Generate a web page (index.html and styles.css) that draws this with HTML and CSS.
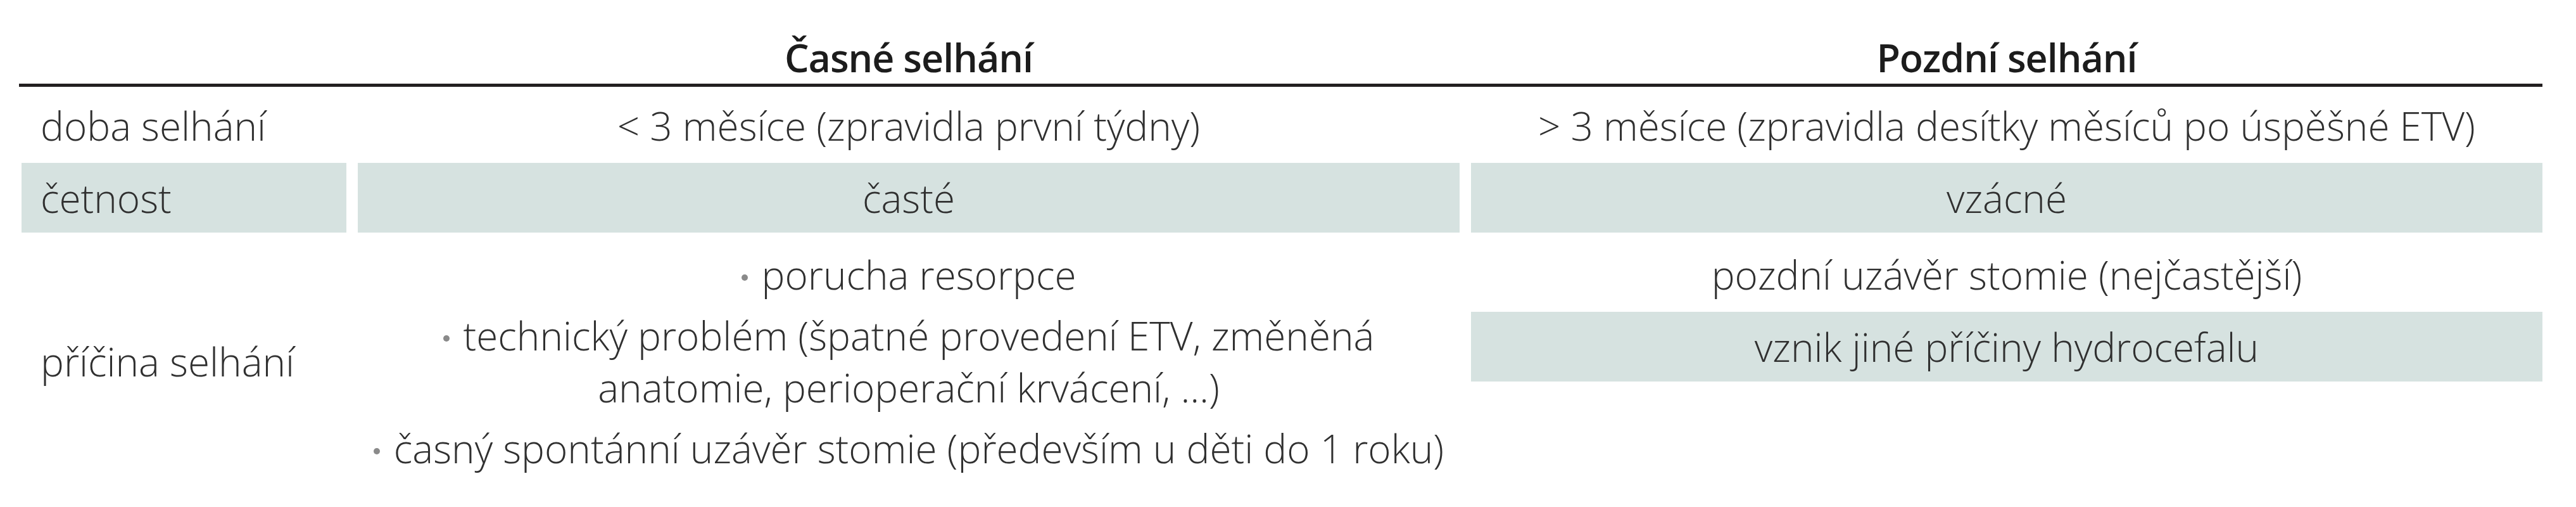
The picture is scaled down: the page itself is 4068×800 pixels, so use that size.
FILE: index.html
```html
<!DOCTYPE html>
<html lang="cs">
<head>
<meta charset="utf-8">
<title>Selhání ETV</title>
<link rel="stylesheet" href="styles.css">
</head>
<body>
<div class="page">
  <div class="table">
    <div class="row head">
      <div class="cell"></div>
      <div class="cell c">Časné selhání</div>
      <div class="cell c">Pozdní selhání</div>
    </div>
    <div class="row r-doba">
      <div class="cell label">doba selhání</div>
      <div class="cell c">&lt; 3 měsíce (zpravidla první týdny)</div>
      <div class="cell c">&gt; 3 měsíce (zpravidla desítky měsíců po úspěšné ETV)</div>
    </div>
    <div class="row r-cet">
      <div class="cell label shade">četnost</div>
      <div class="cell c shade">časté</div>
      <div class="cell c shade">vzácné</div>
    </div>
    <div class="row r-cause">
      <div class="cell label mid">příčina selhání</div>
      <div class="cell c list">
        <p class="item"><span class="dot"></span>porucha resorpce</p>
        <p class="item"><span class="dot"></span>technický problém (špatné provedení ETV, změněná<br>anatomie, perioperační krvácení, …)</p>
        <p class="item"><span class="dot"></span>časný spontánní uzávěr stomie (především u děti do 1 roku)</p>
      </div>
      <div class="stack">
        <div class="cell c pad">pozdní uzávěr stomie (nejčastější)</div>
        <div class="cell c pad shade">vznik jiné příčiny hydrocefalu</div>
      </div>
    </div>
  </div>
</div>
</body>
</html>
```
FILE: styles.css
```css
html, body {
  margin: 0;
  padding: 0;
  background: #ffffff;
}

body {
  font-family: "Open Sans", "Noto Sans", "DejaVu Sans", sans-serif;
  font-weight: 300;
  font-size: 62px;
  line-height: 82px;
  color: #303030;
}

.page {
  padding: 0 53px 0 30px;
}

.table {
  width: 3985px;
}

.row {
  display: grid;
  grid-template-columns: 513px 1740px 1692px;
  column-gap: 18px;
  padding-left: 4px;
}

.head {
  padding-top: 50px;
  border-bottom: 5px solid #231f20;
}

.head .cell {
  font-weight: 600;
  font-size: 61px;
  letter-spacing: -1px;
  color: #1c1c1c;
}

.r-doba {
  padding-top: 20px;
}

.r-cet {
  margin-top: 18px;
}

.r-cet .cell {
  padding: 14px 0;
}

.r-cause {
  margin-top: 11px;
}

.cell.label {
  padding-left: 30px;
}

.c {
  text-align: center;
}

.shade {
  background: #d6e2e0;
}

.mid {
  align-self: center;
}

.list {
  padding: 14px 0;
}

.item {
  margin: 0;
  white-space: nowrap;
}

.item + .item {
  margin-top: 14px;
}

.dot {
  display: inline-block;
  width: 10px;
  height: 10px;
  border-radius: 50%;
  background: #8a8a8a;
  margin-right: 22px;
  vertical-align: 14px;
}

.stack {
  display: flex;
  flex-direction: column;
  gap: 4px;
  align-self: start;
}

.pad {
  padding: 14px 0;
}
```
